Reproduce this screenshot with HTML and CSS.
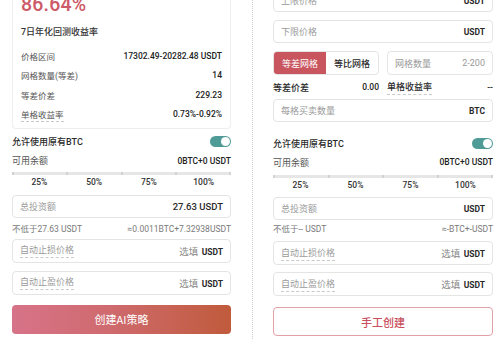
FILE: index.html
```html
<!DOCTYPE html>
<html lang="zh-CN">
<head>
<meta charset="utf-8">
<title>网格策略</title>
<link rel="stylesheet" href="styles.css">
</head>
<body>
<div class="page">
  <div class="col col-left">
    <div class="card">
      <div class="big">86.64%</div>
      <div class="title">7日年化回测收益率</div>
      <div class="kv"><span class="k">价格区间</span><span class="v">17302.49-20282.48 USDT</span></div>
      <div class="kv"><span class="k">网格数量(等差)</span><span class="v">14</span></div>
      <div class="kv"><span class="k">等差价差</span><span class="v">229.23</span></div>
      <div class="kv"><span class="k"><span class="dotted">单格收益率</span></span><span class="v">0.73%-0.92%</span></div>
    </div>
    <div class="row toggle-row"><span class="strong">允许使用原有BTC</span><span class="switch"></span></div>
    <div class="row avail-row"><span class="muted">可用余额</span><span class="v">0BTC+0 USDT</span></div>
    <div class="slider">
      <div class="track"><i></i><i></i><i></i><i></i><i></i></div>
      <div class="pcts"><span>25%</span><span>50%</span><span>75%</span><span>100%</span></div>
    </div>
    <div class="field f-total"><span class="ph">总投资额</span><span class="val">27.63 USDT</span></div>
    <div class="hint"><span>不低于27.63 USDT</span><span>≈0.0011BTC+7.32938USDT</span></div>
    <div class="field f-stop"><span class="ph dotted">自动止损价格</span><span class="opt">选填 <b>USDT</b></span></div>
    <div class="field f-take"><span class="ph dotted">自动止盈价格</span><span class="opt">选填 <b>USDT</b></span></div>
    <button class="btn btn-ai">创建AI策略</button>
  </div>

  <div class="divider"></div>

  <div class="col col-right">
    <div class="field r-upper"><span class="ph">上限价格</span><span class="val">USDT</span></div>
    <div class="field r-lower"><span class="ph">下限价格</span><span class="val">USDT</span></div>
    <div class="pair r-seg">
      <div class="seg"><span class="seg-item active">等差网格</span><span class="seg-item">等比网格</span></div>
      <div class="field f-count"><span class="ph">网格数量</span><span class="ph">2-200</span></div>
    </div>
    <div class="pair r-diff">
      <div class="row"><span class="strong">等差价差</span><span class="v">0.00</span></div>
      <div class="row"><span class="strong dotted">单格收益率</span><span class="v">--</span></div>
    </div>
    <div class="field r-qty"><span class="ph">每格买卖数量</span><span class="val">BTC</span></div>
    <div class="row toggle-row r-toggle"><span class="strong">允许使用原有BTC</span><span class="switch"></span></div>
    <div class="row avail-row"><span class="muted">可用余额</span><span class="v">0BTC+0 USDT</span></div>
    <div class="slider r-slider">
      <div class="track"><i></i><i></i><i></i><i></i><i></i></div>
      <div class="pcts"><span>25%</span><span>50%</span><span>75%</span><span>100%</span></div>
    </div>
    <div class="field r-total"><span class="ph">总投资额</span><span class="val">USDT</span></div>
    <div class="hint r-hint"><span>不低于-- USDT</span><span>≈-BTC+-USDT</span></div>
    <div class="field r-stop"><span class="ph dotted">自动止损价格</span><span class="opt">选填 <b>USDT</b></span></div>
    <div class="field r-take"><span class="ph dotted">自动止盈价格</span><span class="opt">选填 <b>USDT</b></span></div>
    <button class="btn btn-manual">手工创建</button>
  </div>
</div>
</body>
</html>
```

FILE: styles.css
```css
* { box-sizing: border-box; }
html, body {
  margin: 0;
  padding: 0;
  background: #ffffff;
  width: 500px;
  height: 339px;
  overflow: hidden;
  font-family: "Roboto", "Noto Sans CJK SC", sans-serif;
  color: #333;
}
.page {
  display: flex;
  align-items: flex-start;
  padding-left: 12px;
}
.col { display: flex; flex-direction: column; }
.col-left { width: 219px; margin-top: -7px; }
.col-right { width: 220px; margin-left: 20px; margin-top: -11px; }
.divider {
  align-self: stretch;
  width: 0;
  height: 339px;
  margin-left: 21px;
  border-left: 1px dotted #cfcfcf;
}

/* card */
.card {
  border: 1px solid #eeeeee;
  border-top: none;
  border-radius: 0 0 4px 4px;
  padding: 0 8px 4px 8px;
}
.big {
  font-size: 19.5px;
  line-height: 24px;
  height: 24px;
  font-weight: 500;
  color: #cd5a66;
  letter-spacing: 0.2px;
}
.title {
  margin-top: 8.5px;
  font-size: 9px;
  line-height: 13px;
  font-weight: 500;
  color: #333;
}
.title + .kv { margin-top: 7.8px; }
.kv {
  display: flex;
  justify-content: space-between;
  align-items: center;
  height: 19.4px;
  font-size: 8.5px;
}
.k { color: #555; }
.v { color: #222; font-weight: 500; font-size: 8.5px; }
.dotted {
  border-bottom: 1px dashed #c9c9c9;
  padding-bottom: 1px;
}

/* rows */
.row {
  display: flex;
  justify-content: space-between;
  align-items: center;
  font-size: 9px;
}
.strong { font-weight: 500; color: #2a2a2a; }
.muted { color: #555; }
.toggle-row { height: 16px; margin-top: 5px; }
.avail-row { height: 16px; margin-top: 3px; }
.switch {
  position: relative;
  width: 21px;
  height: 11px;
  border-radius: 6px;
  background: #4f9b97;
}
.switch::after {
  content: "";
  position: absolute;
  right: 1px;
  top: 1px;
  width: 9px;
  height: 9px;
  border-radius: 50%;
  background: #fff;
}

/* slider */
.slider { margin-top: 3px; }
.track {
  height: 3px;
  background: #e6e6e6;
  display: flex;
  justify-content: space-between;
}
.track i {
  display: block;
  width: 2px;
  height: 3px;
  background: #d2d2d2;
}
.pcts {
  display: grid;
  grid-template-columns: repeat(4, 1fr);
  text-align: center;
  font-size: 8.5px;
  line-height: 12px;
  font-weight: 500;
  color: #333;
  margin-top: 1px;
}

/* fields */
.field {
  display: flex;
  justify-content: space-between;
  align-items: center;
  height: 24px;
  border: 1px solid #e4e4e4;
  border-radius: 4px;
  padding: 0 7px 0 7px;
  font-size: 9px;
  background: #fff;
}
.ph { color: #9a9a9a; }
.val { color: #2a2a2a; font-weight: 700; font-size: 8.5px; }
.f-total .val { font-size: 9.5px; font-weight: 500; }
.opt { color: #8a8a8a; font-size: 9.5px; }
.opt b { color: #2a2a2a; font-weight: 700; font-size: 8.5px; margin-left: 1px; }
.f-total { margin-top: 7px; height: 23px; }
.hint {
  display: flex;
  justify-content: space-between;
  margin-top: 5px;
  height: 12px;
  line-height: 12px;
  font-size: 8.5px;
  color: #7a7a7a;
}
.f-stop { margin-top: 4px; }
.f-take { margin-top: 8px; }

.btn {
  margin-top: 10px;
  height: 29px;
  border-radius: 4px;
  font-family: "Noto Sans CJK SC", sans-serif;
  font-size: 11px;
  padding: 0;
}
.btn-ai {
  border: none;
  color: #fff;
  background: linear-gradient(90deg, #d77388 0%, #cf6a6e 45%, #c05b3c 100%);
}
.btn-manual {
  margin-top: 11px;
  border: 1px solid #e2a0a7;
  color: #c9505e;
  background: #fff;
  font-weight: 500;
}

/* right column */
.r-upper { height: 23px; }
.r-lower { margin-top: 8px; height: 23px; }
.pair {
  display: grid;
  grid-template-columns: 1fr 1fr;
  column-gap: 8px;
}
.r-seg { margin-top: 8px; height: 24px; }
.seg {
  display: grid;
  grid-template-columns: 1fr 1fr;
  border: 1px solid #e4e4e4;
  border-radius: 4px;
  overflow: hidden;
}
.seg-item {
  display: flex;
  align-items: center;
  justify-content: center;
  font-size: 9px;
  font-weight: 500;
  color: #2a2a2a;
}
.seg-item.active { background: #c9565f; color: #fff; font-weight: 400; }
.f-count { height: 24px; }
.r-diff { margin-top: 5px; height: 14px; }
.r-diff .row { height: 14px; }
.r-qty { margin-top: 5px; height: 23px; }
.r-toggle { margin-top: 13px; }
.r-slider { margin-top: 5px; }
.r-total { margin-top: 6px; height: 23px; }
.r-hint { margin-top: 3px; }
.r-stop { margin-top: 6px; }
.r-take { margin-top: 7px; }
```
